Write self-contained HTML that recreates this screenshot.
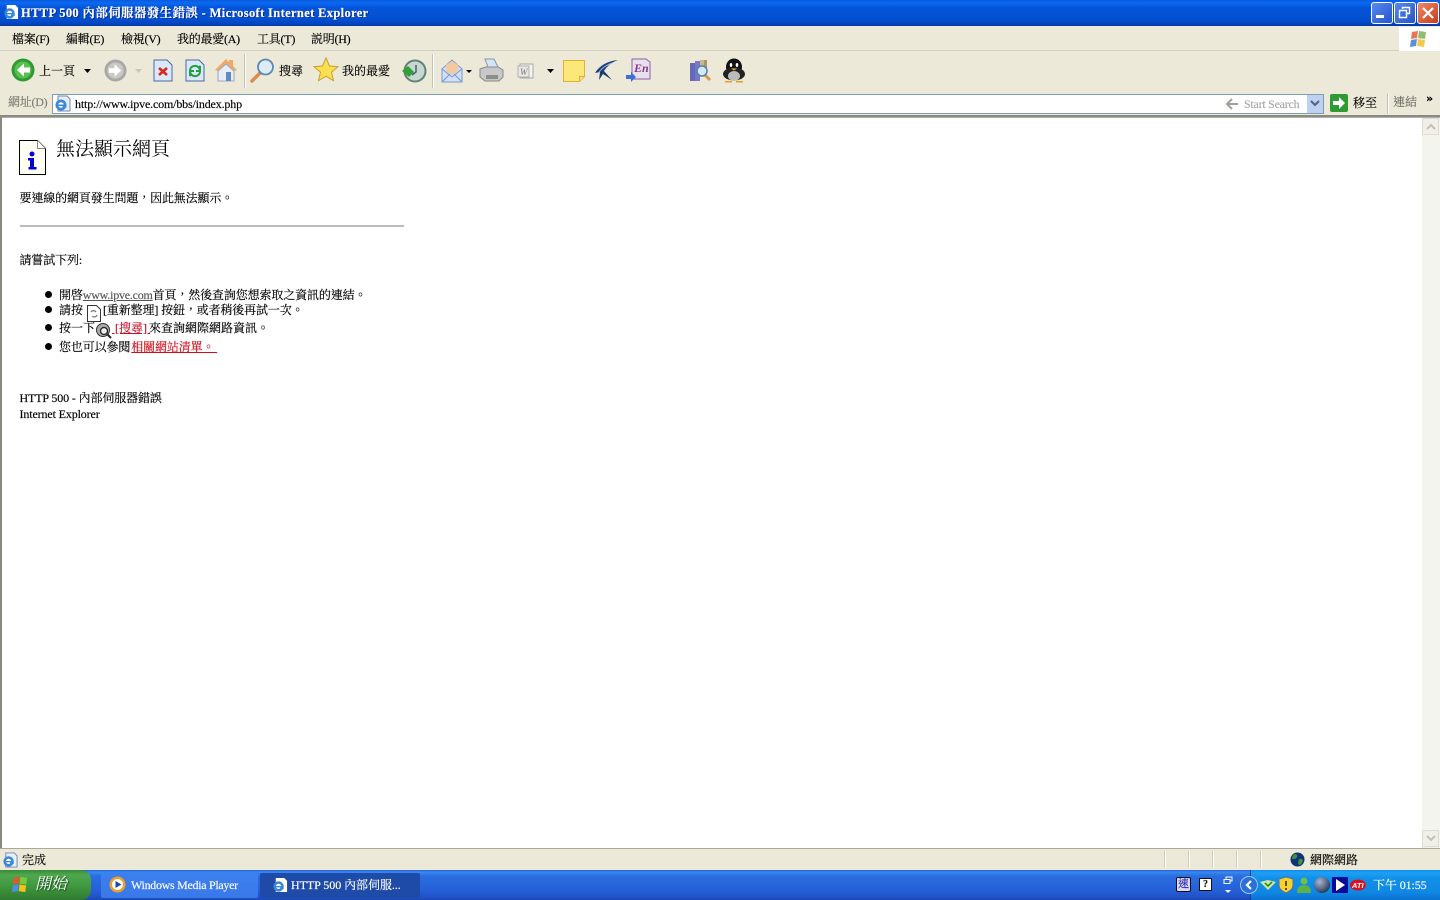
<!DOCTYPE html>
<html lang="zh-Hant"><head><meta charset="utf-8"><title>HTTP 500 內部伺服器發生錯誤</title>
<style>
html,body{margin:0;padding:0;width:1440px;height:900px;overflow:hidden;background:#fff}
body{position:relative;font-family:"Liberation Serif","Noto Serif CJK SC","Noto Serif CJK TC",serif;font-size:12px;color:#000;-webkit-text-stroke:.15px currentColor}
.a{position:absolute;white-space:nowrap;line-height:16px}
.m{letter-spacing:-.25px}
.l{letter-spacing:-.13px}
.b{position:absolute}
svg{position:absolute;overflow:visible}
a{color:inherit}
</style></head><body>

<!-- title bar -->
<div class="b" style="left:0;top:0;width:1440px;height:26px;background:linear-gradient(#0a5ae0 0,#0a6af0 3px,#0553d8 8px,#0350d2 18px,#0348c4 23px,#0238a8 26px)"></div>
<svg style="left:3px;top:4px" width="16" height="16" viewBox="0 0 17 17"><path d="M4 1h9l3 3v12H4z" fill="#fff"/><circle cx="7" cy="10" r="5.500" fill="#3a88d8"/><circle cx="7" cy="10" r="2.800" fill="#fff"/><rect x="4" y="9.500" width="6" height="1.500" fill="#3a88d8"/><rect x="8.500" y="11" width="4" height="1.600" fill="#3a88d8"/></svg>
<div class="a" style="left:21px;top:5px;color:#fff;font-weight:bold;font-size:12.500px;letter-spacing:.35px;text-shadow:1px 1px 0 #0a2a90">HTTP 500 內部伺服器發生錯誤 - Microsoft Internet Explorer</div>
<div class="b" style="left:1371px;top:2px;width:20px;height:20px;border:1px solid #fff;border-radius:3px;background:linear-gradient(135deg,#5a88ea,#2454d0)"></div>
<div class="b" style="left:1376px;top:15px;width:8px;height:3px;background:#fff"></div>
<div class="b" style="left:1394px;top:2px;width:20px;height:20px;border:1px solid #fff;border-radius:3px;background:linear-gradient(135deg,#5a88ea,#2454d0)"></div>
<svg style="left:1398px;top:6px" width="14" height="14"><path d="M4.500 3V1.500h7v6H9M1.500 4.500h7v7h-7z" fill="none" stroke="#fff" stroke-width="1.400"/></svg>
<div class="b" style="left:1417px;top:2px;width:20px;height:20px;border:1px solid #fff;border-radius:3px;background:linear-gradient(135deg,#ec8a68,#c83c18)"></div>
<svg style="left:1422px;top:7px" width="12" height="12"><path d="M1 1l10 10M11 1L1 11" stroke="#fff" stroke-width="2.200"/></svg>

<!-- menu bar -->
<div class="b" style="left:0;top:26px;width:1440px;height:25px;background:#ece9d8;border-bottom:1px solid #d4d0c0;box-sizing:border-box"></div>
<div class="a m" style="left:12px;top:31px">檔案(F)</div>
<div class="a m" style="left:66px;top:31px">編輯(E)</div>
<div class="a m" style="left:121px;top:31px">檢視(V)</div>
<div class="a m" style="left:177px;top:31px">我的最愛(A)</div>
<div class="a m" style="left:257px;top:31px">工具(T)</div>
<div class="a m" style="left:311px;top:31px">説明(H)</div>
<div class="b" style="left:1399px;top:27px;width:41px;height:24px;background:#fff"></div>
<svg style="left:1409px;top:29px" width="20" height="20" viewBox="0 0 20 20"><path d="M3 3l6-1-1 7-6 1z" fill="#e8745c"/><path d="M10 2l7 1-1 7-7-1z" fill="#8cc070"/><path d="M2 11l6-1-1 7-6 1z" fill="#5a90d8"/><path d="M9 10l7 1-1 7-7-1z" fill="#f4c850"/></svg>

<!-- toolbar -->
<div class="b" style="left:0;top:51px;width:1440px;height:41px;background:#ece9d8;border-bottom:1px solid #fff;box-sizing:content-box"></div>
<svg style="left:11px;top:58px" width="24" height="24" viewBox="0 0 24 24"><circle cx="12" cy="12" r="11.500" fill="#2f9a34"/><circle cx="12" cy="12" r="8.500" fill="#58c050"/><path d="M13 5.500L6 12l7 6.500v-4h6v-5h-6z" fill="#fff"/></svg>
<div class="a" style="left:39px;top:63px">上一頁</div>
<svg style="left:84px;top:69px" width="7" height="4"><path d="M0 0h7L3.500 4z" fill="#000"/></svg>
<svg style="left:104px;top:59px" width="23" height="23" viewBox="0 0 24 24"><circle cx="12" cy="12" r="11.500" fill="#a8a8a4"/><circle cx="12" cy="12" r="8.500" fill="#c8c8c4"/><path d="M11 5.500L18 12l-7 6.500v-4H5v-5h6z" fill="#fff"/></svg>
<svg style="left:135px;top:69px" width="7" height="4"><path d="M0 0h7L3.500 4z" fill="#c8c8c0"/></svg>
<svg style="left:153px;top:59px" width="20" height="23" viewBox="0 0 20 23"><path d="M1 1h13l5 5v16H1z" fill="#dce8fa" stroke="#4a68a8"/><path d="M6 9l8 7M14 9l-8 7" stroke="#d8281c" stroke-width="2.600"/></svg>
<svg style="left:185px;top:59px" width="20" height="23" viewBox="0 0 20 23"><path d="M1 1h13l5 5v16H1z" fill="#dce8fa" stroke="#4a68a8"/><path d="M5 11a5 5 0 0 1 9-2l1-2v5h-4M15 13a5 5 0 0 1-9 2l-1 2v-5h4" fill="none" stroke="#20a040" stroke-width="2"/></svg>
<svg style="left:214px;top:58px" width="24" height="24" viewBox="0 0 24 24"><path d="M1 12L12 1l3 3V2h4v6l4 4-3 1v10H4V13z" fill="#f0a868"/><path d="M4 13l8-7 8 7v10H4z" fill="#e8ecf4" stroke="#98a8c0"/><rect x="12" y="14" width="5" height="9" fill="#6488c0"/></svg>
<div class="b" style="left:244px;top:54px;width:1px;height:34px;background:#c4c2b4;border-right:1px solid #fff"></div>
<svg style="left:250px;top:58px" width="25" height="25" viewBox="0 0 25 25"><path d="M10 15L2 23" stroke="#d88c50" stroke-width="3.500" stroke-linecap="round"/><circle cx="15.500" cy="9" r="7.500" fill="#dcecfa" stroke="#5a88b8" stroke-width="1.800"/></svg>
<div class="a" style="left:279px;top:63px">搜尋</div>
<svg style="left:313px;top:57px" width="26" height="26" viewBox="0 0 26 26"><path d="M13 1l3.500 8 8.500.7-6.500 5.500 2 8.500-7.500-4.500-7.500 4.500 2-8.500L1 9.700 9.500 9z" fill="#fce050" stroke="#c8a030"/></svg>
<div class="a" style="left:342px;top:63px">我的最愛</div>
<svg style="left:402px;top:59px" width="24" height="24" viewBox="0 0 24 24"><circle cx="13" cy="12" r="10.500" fill="#c8d8d0" stroke="#608078" stroke-width="2"/><path d="M14 6v7l-4 3" stroke="#406080" stroke-width="1.500" fill="none"/><path d="M0 12l6-5 6 6-5 5z" fill="#30a030"/></svg>
<div class="b" style="left:432px;top:54px;width:1px;height:34px;background:#c4c2b4;border-right:1px solid #fff"></div>
<svg style="left:441px;top:59px" width="24" height="24" viewBox="0 0 24 24"><path d="M1 10L11 1l10 9v13H1z" fill="#d0e0f8" stroke="#7898d0"/><path d="M5 12V6l6-4 6 4v6l-6 4z" fill="#f4c8a0"/><path d="M1 10l10 8 10-8M1 23l8-8M21 23l-8-8" fill="none" stroke="#7898d0"/></svg>
<svg style="left:466px;top:70px" width="6" height="3"><path d="M0 0h6L3 3z" fill="#000"/></svg>
<svg style="left:479px;top:58px" width="25" height="25" viewBox="0 0 25 25"><path d="M6 1h9l4 8H9z" fill="#d4e4f4" stroke="#8898a8"/><path d="M1 11l6-2h12l5 3v7l-4 4H6l-5-4z" fill="#c8c8c8" stroke="#888"/><rect x="7" y="17" width="12" height="4" fill="#8c8c8c"/></svg>
<svg style="left:518px;top:63px" width="16" height="16" viewBox="0 0 16 16"><rect x="2" y="1" width="13" height="14" fill="#f4f4f0" stroke="#a8a8a8"/><rect x="0" y="3" width="11" height="11" fill="#e8e8e4" stroke="#b0b0b0"/><text x="2" y="12" font-size="9" font-style="italic" fill="#777">W</text></svg>
<svg style="left:547px;top:69px" width="7" height="4"><path d="M0 0h7L3.500 4z" fill="#000"/></svg>
<svg style="left:563px;top:60px" width="22" height="22" viewBox="0 0 22 22"><path d="M.5.500h21v16l-5 5H.5z" fill="#fce878" stroke="#e0b030"/><path d="M21.500 16.500h-5v5" fill="#f4d890" stroke="#e0b030"/></svg>
<svg style="left:594px;top:59px" width="24" height="24" viewBox="0 0 24 24"><path d="M24 1C14 2 6 6 1 14l5-1-1 8 4-6 9 6-8-9c3-5 8-9 14-11z" fill="#1c3c78"/><path d="M18 4C12 6 8 9 5 13" stroke="#a0b8e0" fill="none"/></svg>
<svg style="left:626px;top:58px" width="25" height="25" viewBox="0 0 25 25"><path d="M6 1h14l4 3v17H6z" fill="#e8e0ec" stroke="#8860a8"/><text x="8" y="14" font-size="12" font-style="italic" font-weight="bold" fill="#8a3a88">En</text><path d="M0 17h5v-3l5 5-5 5v-3H0z" fill="#3a70d8"/></svg>
<svg style="left:689px;top:59px" width="23" height="23" viewBox="0 0 23 23"><rect x="1" y="4" width="5" height="18" fill="#6868b8"/><rect x="6" y="2" width="5" height="20" fill="#7878c8"/><rect x="11" y="1" width="4" height="14" fill="#c8b888"/><rect x="15" y="1" width="3" height="12" fill="#a89868"/><path d="M15 15l6 6" stroke="#d89848" stroke-width="3"/><circle cx="13" cy="12" r="5" fill="#d4e8f8" stroke="#5080b0" stroke-width="1.500"/></svg>
<svg style="left:722px;top:58px" width="24" height="25" viewBox="0 0 24 25"><ellipse cx="12" cy="9" rx="8" ry="8.500" fill="#111"/><ellipse cx="12" cy="16" rx="11" ry="6.500" fill="#222"/><ellipse cx="12" cy="18" rx="6" ry="5" fill="#bbb"/><ellipse cx="9" cy="7" rx="1.300" ry="2" fill="#fff"/><ellipse cx="15" cy="7" rx="1.300" ry="2" fill="#fff"/><path d="M3 23h7v1.500H3zM14 23h7v1.500h-7z" fill="#e8a020"/><path d="M9 10.500h6l-3 2z" fill="#f0b030"/></svg>

<!-- address bar -->
<div class="b" style="left:0;top:92px;width:1440px;height:23px;background:#ece9d8"></div>
<div class="a m" style="left:8px;top:94px;color:#7c7c74">網址(D)</div>
<div class="b" style="left:52px;top:94px;width:1272px;height:20px;background:#fff;border:1px solid #7f9db9;box-sizing:border-box"></div>
<svg style="left:54px;top:95px" width="17" height="17" viewBox="0 0 17 17"><path d="M4 1h9l3 3v12H4z" fill="#e8eefa" stroke="#7088b0"/><circle cx="7" cy="10" r="5.500" fill="#3a88d8"/><circle cx="7" cy="10" r="2.800" fill="#fff"/><rect x="4" y="9.500" width="6" height="1.500" fill="#3a88d8"/><rect x="8.500" y="11" width="4" height="1.600" fill="#3a88d8"/></svg>
<div class="a" style="left:75px;top:96px;letter-spacing:-.16px">http://www.ipve.com/bbs/index.php</div>
<svg style="left:1225px;top:97px" width="14" height="14"><path d="M7 2L2 7l5 5M2 7h11" fill="none" stroke="#a0a098" stroke-width="2"/></svg>
<div class="a" style="left:1244px;top:96px;color:#a8a8a8;letter-spacing:-.25px">Start Search</div>
<div class="b" style="left:1307px;top:95px;width:16px;height:18px;background:#c0d0f0"></div>
<svg style="left:1310px;top:100px" width="10" height="8"><path d="M1 1l4 4 4-4" fill="none" stroke="#4d6185" stroke-width="2"/></svg>
<svg style="left:1330px;top:94px" width="18" height="18" viewBox="0 0 18 18"><rect width="18" height="18" rx="2" fill="#2f9a34"/><path d="M9 3l6 6-6 6v-4H3V7h6z" fill="#fff"/></svg>
<div class="a" style="left:1353px;top:95px">移至</div>
<div class="b" style="left:1387px;top:93px;width:1px;height:21px;background:#c4c2b4;border-right:1px solid #fff"></div>
<div class="a" style="left:1393px;top:94px;color:#6c6c64">連結</div>
<div class="a" style="left:1426px;top:91px;font-weight:bold;font-family:'DejaVu Sans',sans-serif;font-size:11px">»</div>

<!-- content frame -->
<div class="b" style="left:0;top:115px;width:1440px;height:2px;background:#8c8a7c;border-bottom:1px solid #a8b0b8"></div>
<div class="b" style="left:0;top:117px;width:2px;height:733px;background:#8c8a7c"></div>
<div class="b" style="left:1422px;top:118px;width:18px;height:730px;background:#f4f4ee"></div>
<div class="b" style="left:1422px;top:118px;width:17px;height:17px;background:#f0f0e8;border:1px solid #dcdcd4;box-sizing:border-box"></div>
<svg style="left:1426px;top:123px" width="10" height="7"><path d="M1 6l4-4 4 4" fill="none" stroke="#c0c0b8" stroke-width="2"/></svg>
<div class="b" style="left:1422px;top:830px;width:17px;height:17px;background:#f0f0e8;border:1px solid #dcdcd4;box-sizing:border-box"></div>
<svg style="left:1426px;top:835px" width="10" height="7"><path d="M1 1l4 4 4-4" fill="none" stroke="#c0c0b8" stroke-width="2"/></svg>

<!-- page content -->
<svg style="left:19px;top:140px" width="27" height="35" viewBox="0 0 27 35"><path d="M.5.500h18l8 8v26H.5z" fill="#fffff4" stroke="#000"/><path d="M18.500.500v8h8" fill="#fff" stroke="#888"/><circle cx="13" cy="14" r="2.500" fill="#0000d0"/><path d="M9 18h6v9h2.500v2.500h-8V27H11v-6.500H9z" fill="#0000d0"/></svg>
<div class="a" style="left:56px;top:138px;font-size:19px;line-height:24px;-webkit-text-stroke:0">無法顯示網頁</div>
<div class="a l" style="left:19.500px;top:190px">要連線的網頁發生問題，因此無法顯示。</div>
<div class="b" style="left:20px;top:225px;width:384px;height:2px;background:#bcbcbc"></div>
<div class="a l" style="left:19.500px;top:252px">請嘗試下列:</div>

<div class="b" style="left:45px;top:291px;width:7px;height:7px;border-radius:50%;background:#000"></div>
<div class="a l" style="left:59px;top:287px">開啓<span style="color:#555;text-decoration:underline;letter-spacing:-.22px">www.ipve.com</span>首頁，然後查詢您想索取之資訊的連結。</div>
<div class="b" style="left:45px;top:306px;width:7px;height:7px;border-radius:50%;background:#000"></div>
<div class="a" style="left:59px;top:302px">請按</div>
<svg style="left:87px;top:305px" width="14" height="17" viewBox="0 0 14 17"><path d="M.5.500h9l4 4v12H.5z" fill="#fff" stroke="#333"/><path d="M4 7a3 3 0 0 1 5 0M10 10a3 3 0 0 1-5 1" fill="none" stroke="#777" stroke-width="1.200"/></svg>
<div class="a l" style="left:103px;top:302px">[重新整理] 按鈕，或者稍後再試一次。</div>
<div class="b" style="left:45px;top:324px;width:7px;height:7px;border-radius:50%;background:#000"></div>
<div class="a" style="left:59px;top:320px">按一下</div>
<svg style="left:96px;top:323px" width="16" height="16" viewBox="0 0 16 16"><circle cx="7" cy="7" r="6.500" fill="#aaa" stroke="#333"/><circle cx="8" cy="8" r="3.500" fill="#eee" stroke="#222" stroke-width="1.300"/><path d="M11 11l4 4" stroke="#222" stroke-width="2"/></svg>
<div class="a" style="left:112px;top:320px;color:#c8102c;text-decoration:underline">&nbsp;[搜尋]&nbsp;</div>
<div class="a" style="left:149px;top:320px">來查詢網際網路資訊。</div>
<div class="b" style="left:45px;top:343px;width:7px;height:7px;border-radius:50%;background:#000"></div>
<div class="a l" style="left:59px;top:339px">您也可以參閱<span style="color:#d0101c;text-decoration:underline;margin-left:1px">相關網站清單。&nbsp;</span></div>

<div class="a l" style="left:19.500px;top:390px">HTTP 500 - 內部伺服器錯誤</div>
<div class="a l" style="left:19.500px;top:406px">Internet Explorer</div>

<!-- status bar -->
<div class="b" style="left:0;top:848px;width:1440px;height:22px;background:#ece9d8;border-top:1px solid #a8a89c;box-sizing:border-box"></div>
<svg style="left:2px;top:852px" width="16" height="16" viewBox="0 0 17 17"><path d="M4 1h9l3 3v12H4z" fill="#e8eefa" stroke="#7088b0"/><circle cx="7" cy="10" r="5.500" fill="#3a88d8"/><circle cx="7" cy="10" r="2.800" fill="#fff"/><rect x="4" y="9.500" width="6" height="1.500" fill="#3a88d8"/><rect x="8.500" y="11" width="4" height="1.600" fill="#3a88d8"/></svg>
<div class="a" style="left:22px;top:852px">完成</div>
<div class="b" style="left:1164px;top:851px;width:1px;height:17px;background:#d0ccb8;box-shadow:24px 0 #d0ccb8,48px 0 #d0ccb8,72px 0 #d0ccb8,96px 0 #d0ccb8,1px 0 #fff,25px 0 #fff,49px 0 #fff,73px 0 #fff,97px 0 #fff"></div>
<svg style="left:1290px;top:852px" width="15" height="15" viewBox="0 0 15 15"><circle cx="7.500" cy="7.500" r="7" fill="#12307c"/><path d="M3 3c3-2 5 0 4 2S3 8 2 6zM9 7c3-1 5 1 3 4s-4 2-4 0z" fill="#3a9a30"/></svg>
<div class="a" style="left:1310px;top:852px">網際網路</div>

<!-- taskbar -->
<div class="b" style="left:0;top:870px;width:1440px;height:30px;background:linear-gradient(#1f60d8 0,#3a88f0 2px,#2a6ee0 6px,#2560d8 20px,#1f50c4 28px,#1a45b0 30px)"></div>
<div class="b" style="left:0;top:870px;width:91px;height:30px;border-radius:0 10px 10px 0;background:linear-gradient(#388a38 0,#4fa84f 5px,#3d943d 18px,#2f7a2f 30px)"></div>
<svg style="left:11px;top:875px" width="19" height="19" viewBox="0 0 20 20"><path d="M3 3l6-1-1 7-6 1z" fill="#e8542c"/><path d="M10 2l7 1-1 7-7-1z" fill="#7cc83c"/><path d="M2 11l6-1-1 7-6 1z" fill="#4a90e8"/><path d="M9 10l7 1-1 7-7-1z" fill="#f4c020"/></svg>
<div class="a" style="left:35px;top:875px;color:#fff;font-size:16px;line-height:20px;font-style:italic;text-shadow:1px 1px 1px #1a4a1a;-webkit-text-stroke:0">開始</div>
<div class="b" style="left:101px;top:873px;width:157px;height:25px;border-radius:2px;background:linear-gradient(#3c80f0,#3a78e8)"></div>
<svg style="left:109px;top:876px" width="17" height="17" viewBox="0 0 17 17"><circle cx="8.500" cy="8.500" r="8" fill="#f0a020"/><circle cx="8.500" cy="8.500" r="5.500" fill="#fff"/><path d="M6.500 5l6 3.500-6 3.500z" fill="#2048a8"/></svg>
<div class="a" style="left:131px;top:877px;color:#fff;letter-spacing:-.3px">Windows Media Player</div>
<div class="b" style="left:260px;top:873px;width:160px;height:25px;border-radius:2px;background:#1e4aa8"></div>
<svg style="left:272px;top:877px" width="16" height="16" viewBox="0 0 17 17"><path d="M4 1h9l3 3v12H4z" fill="#fff"/><circle cx="7" cy="10" r="5.500" fill="#3a88d8"/><circle cx="7" cy="10" r="2.800" fill="#fff"/><rect x="4" y="9.500" width="6" height="1.500" fill="#3a88d8"/><rect x="8.500" y="11" width="4" height="1.600" fill="#3a88d8"/></svg>
<div class="a" style="left:291px;top:877px;color:#fff;letter-spacing:-.05px">HTTP 500 內部伺服...</div>

<!-- tray -->
<div class="b" style="left:1176px;top:877px;width:15px;height:15px;background:#d8d8f8;border:1px solid #111;border-radius:2px;box-sizing:border-box;color:#2020a0;font-size:11px;line-height:13px;text-align:center">速</div>
<div class="b" style="left:1199px;top:878px;width:13px;height:13px;background:#fff;border:1px solid #111;box-sizing:border-box;color:#111;font-size:10px;line-height:11px;text-align:center;font-weight:bold">?</div>
<svg style="left:1223px;top:876px" width="10" height="18"><path d="M1 3.500h6v4H1zM3 3.500V1h6v4H7" fill="none" stroke="#fff"/><path d="M2 14h6l-3 3z" fill="#fff"/></svg>
<div class="b" style="left:1250px;top:870px;width:190px;height:30px;background:linear-gradient(#0f8cf0 0,#1ea0f4 3px,#1290e8 8px,#0f88e4 22px,#0c70d0 30px);border-left:1px solid #1242a0;box-sizing:border-box"></div>
<svg style="left:1240px;top:876px" width="18" height="18" viewBox="0 0 18 18"><circle cx="9" cy="9" r="8.500" fill="#2a70d8" stroke="#a0c8f8"/><path d="M11 5L7 9l4 4" fill="none" stroke="#fff" stroke-width="2.200"/></svg>
<svg style="left:1260px;top:879px" width="16" height="12"><path d="M0 3l8-2 8 2-8 8z" fill="#c8e8a0"/><path d="M5 4l3 3 4-4" stroke="#208020" stroke-width="1.500" fill="none"/></svg>
<svg style="left:1279px;top:877px" width="14" height="16"><path d="M7 0l7 2v6c0 4-3 6-7 8-4-2-7-4-7-8V2z" fill="#f4d030" stroke="#5070a0"/><path d="M7 4v5M7 11v2" stroke="#604000" stroke-width="1.800"/></svg>
<svg style="left:1297px;top:877px" width="14" height="16"><circle cx="7" cy="4" r="3.500" fill="#70c050"/><path d="M0 16c0-6 3-8 7-8s7 2 7 8z" fill="#60b048"/></svg>
<svg style="left:1314px;top:877px" width="16" height="16"><defs><radialGradient id="g" cx=".35" cy=".3" r=".8"><stop offset="0" stop-color="#a8b8d0"/><stop offset="1" stop-color="#1c2c50"/></radialGradient></defs><circle cx="8" cy="8" r="8" fill="url(#g)"/></svg>
<svg style="left:1332px;top:877px" width="16" height="16"><rect width="16" height="16" fill="#0a0a98"/><path d="M4 2l9 6-9 6z" fill="#fff"/></svg>
<svg style="left:1350px;top:879px" width="16" height="12"><ellipse cx="8" cy="6" rx="8" ry="5.500" fill="#d81020"/><text x="2" y="9" font-size="7.500" font-weight="bold" font-style="italic" font-family="Liberation Sans" fill="#fff">ATI</text></svg>
<div class="a" style="left:1373px;top:877px;color:#fff;letter-spacing:-.1px">下午 01:55</div>

</body></html>
